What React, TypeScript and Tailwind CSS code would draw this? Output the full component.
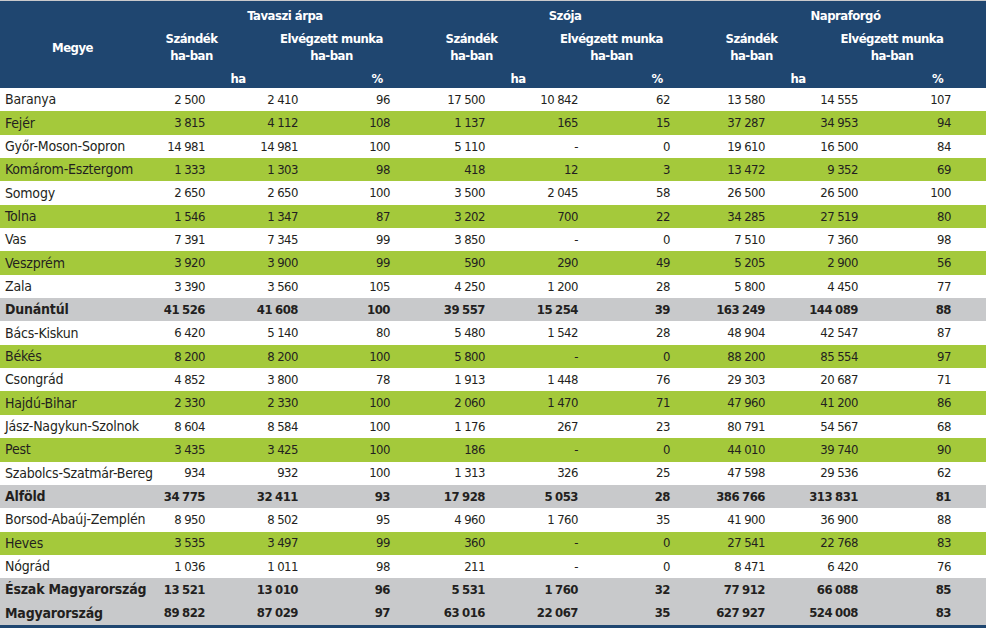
const rows: string[][] = [
  ["Baranya", "2 500", "2 410", "96", "17 500", "10 842", "62", "13 580", "14 555", "107", "w"],
  ["Fejér", "3 815", "4 112", "108", "1 137", "165", "15", "37 287", "34 953", "94", "g"],
  ["Győr-Moson-Sopron", "14 981", "14 981", "100", "5 110", "-", "0", "19 610", "16 500", "84", "w"],
  ["Komárom-Esztergom", "1 333", "1 303", "98", "418", "12", "3", "13 472", "9 352", "69", "g"],
  ["Somogy", "2 650", "2 650", "100", "3 500", "2 045", "58", "26 500", "26 500", "100", "w"],
  ["Tolna", "1 546", "1 347", "87", "3 202", "700", "22", "34 285", "27 519", "80", "g"],
  ["Vas", "7 391", "7 345", "99", "3 850", "-", "0", "7 510", "7 360", "98", "w"],
  ["Veszprém", "3 920", "3 900", "99", "590", "290", "49", "5 205", "2 900", "56", "g"],
  ["Zala", "3 390", "3 560", "105", "4 250", "1 200", "28", "5 800", "4 450", "77", "w"],
  ["Dunántúl", "41 526", "41 608", "100", "39 557", "15 254", "39", "163 249", "144 089", "88", "s"],
  ["Bács-Kiskun", "6 420", "5 140", "80", "5 480", "1 542", "28", "48 904", "42 547", "87", "w"],
  ["Békés", "8 200", "8 200", "100", "5 800", "-", "0", "88 200", "85 554", "97", "g"],
  ["Csongrád", "4 852", "3 800", "78", "1 913", "1 448", "76", "29 303", "20 687", "71", "w"],
  ["Hajdú-Bihar", "2 330", "2 330", "100", "2 060", "1 470", "71", "47 960", "41 200", "86", "g"],
  ["Jász-Nagykun-Szolnok", "8 604", "8 584", "100", "1 176", "267", "23", "80 791", "54 567", "68", "w"],
  ["Pest", "3 435", "3 425", "100", "186", "-", "0", "44 010", "39 740", "90", "g"],
  ["Szabolcs-Szatmár-Bereg", "934", "932", "100", "1 313", "326", "25", "47 598", "29 536", "62", "w"],
  ["Alföld", "34 775", "32 411", "93", "17 928", "5 053", "28", "386 766", "313 831", "81", "s"],
  ["Borsod-Abaúj-Zemplén", "8 950", "8 502", "95", "4 960", "1 760", "35", "41 900", "36 900", "88", "w"],
  ["Heves", "3 535", "3 497", "99", "360", "-", "0", "27 541", "22 768", "83", "g"],
  ["Nógrád", "1 036", "1 011", "98", "211", "-", "0", "8 471", "6 420", "76", "w"],
  ["Észak Magyarország", "13 521", "13 010", "96", "5 531", "1 760", "32", "77 912", "66 088", "85", "s"],
  ["Magyarország", "89 822", "87 029", "97", "63 016", "22 067", "35", "627 927", "524 008", "83", "s"],
]

const cols = "grid grid-cols-[145px_93px_93px_94px_93px_93px_94px_93px_93px_95px]"
const groups = ["Tavaszi árpa", "Szója", "Napraforgó"]

// narrow gap between thousands, like the print version
function Num({ v }: { v: string }) {
  const parts = v.split(" ")
  if (parts.length === 1) return <>{v}</>
  return (
    <>
      {parts[0]}
      <span className="inline-block w-[3px]" />
      {parts[1]}
    </>
  )
}

function Header() {
  return (
    <div className={cols + " grid-rows-[26px_39px_22px] bg-[#1f4670] text-white font-bold text-[13px] tracking-[-0.5px] leading-[17px] border-t border-[#c9c9cb]"}>
      <div className="row-span-3 flex items-center justify-center pt-[6px]">Megye</div>
      {groups.map((g, i) => (
        <div key={g} className={["col-start-2 col-span-3", "col-start-5 col-span-3", "col-start-8 col-span-3"][i] + " row-start-1 flex items-center justify-center pt-[2px]"}>
          {g}
        </div>
      ))}
      {groups.map((g, i) => (
        <div key={g + "s"} className={["col-start-2", "col-start-5", "col-start-8"][i] + " row-start-2 flex flex-col items-center justify-center text-center"}>
          <span>Szándék</span>
          <span>ha-ban</span>
        </div>
      ))}
      {groups.map((g, i) => (
        <div key={g + "e"} className={["col-start-3 col-span-2", "col-start-6 col-span-2", "col-start-9 col-span-2"][i] + " row-start-2 flex flex-col items-center justify-center text-center"}>
          <span>Elvégzett munka</span>
          <span>ha-ban</span>
        </div>
      ))}
      {groups.map((g, i) => (
        <div key={g + "h"} className={["col-start-2 col-span-2", "col-start-5 col-span-2", "col-start-8 col-span-2"][i] + " row-start-3 flex items-center justify-center pt-[2px]"}>
          ha
        </div>
      ))}
      {groups.map((g, i) => (
        <div key={g + "p"} className={["col-start-4", "col-start-7", "col-start-10"][i] + " row-start-3 flex items-center justify-center pr-[2px] pt-[2px]"}>
          %
        </div>
      ))}
    </div>
  )
}

export default function App() {
  return (
    <div className="w-[986px] h-[628px] bg-white overflow-hidden font-['Liberation_Sans_Narrow','DejaVu_Sans_Condensed',sans-serif] text-[#231f20]">
      <Header />
      <div className="border-b-[3px] border-[#1f4670]">
        {rows.map((r) => {
          const kind = r[10]
          const bg = kind === "g" ? "bg-[#a4c93b]" : kind === "s" ? "bg-[#c8c9cb] font-bold" : "bg-white"
          return (
            <div key={r[0]} className={cols + " h-[23.35px] items-center " + bg}>
              <div className="pl-[5px] whitespace-nowrap text-[14px] tracking-[-0.2px]">{r[0]}</div>
              {r.slice(1, 10).map((v, j) => (
                <div key={j} className={"text-right whitespace-nowrap text-[13px] tracking-[-0.5px] " + (j % 3 === 2 ? "pr-[35px]" : "pr-[33px]")}>
                  <Num v={v} />
                </div>
              ))}
            </div>
          )
        })}
      </div>
    </div>
  )
}
